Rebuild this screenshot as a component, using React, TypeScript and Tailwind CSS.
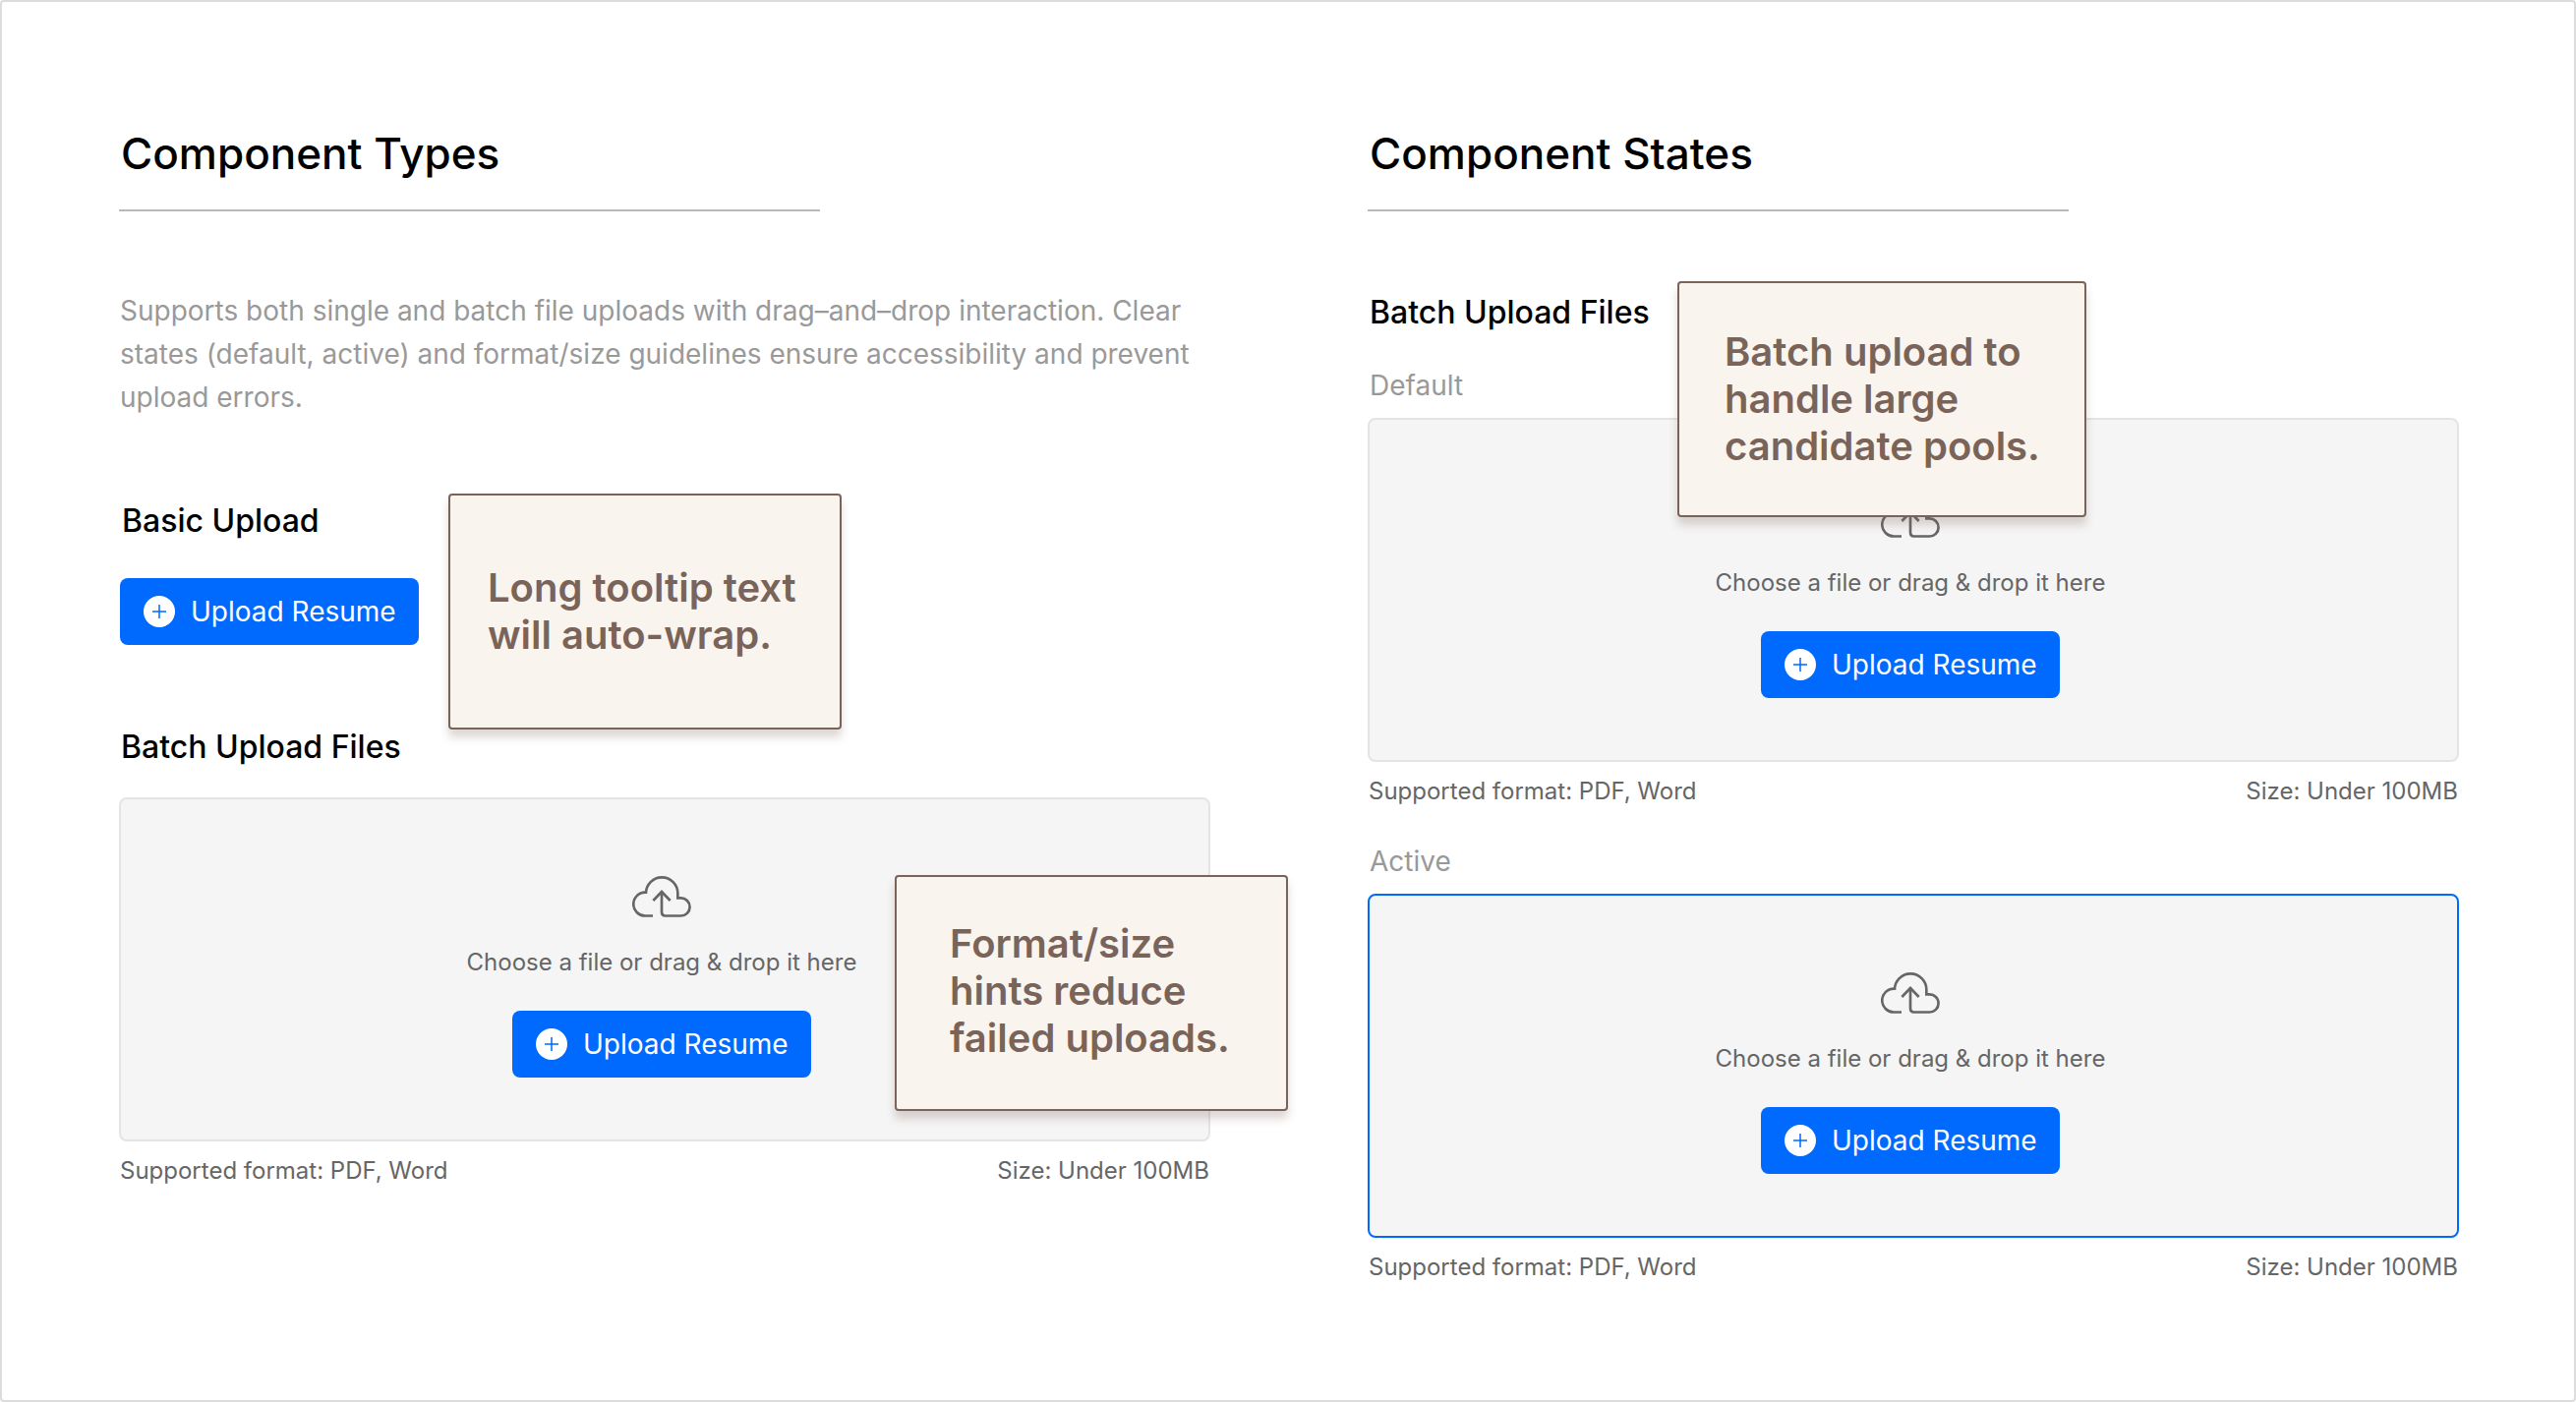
import type { ReactNode } from "react";
import clsx from "clsx";

function CloudUploadIcon() {
  return (
    <svg
      className="h-[42px] w-[60px]"
      viewBox="0 0 180 126"
      fill="none"
      stroke="currentColor"
      strokeWidth="8"
      aria-hidden="true"
    >
      <path d="M63 121.5H39.5A35.75 35.75 0 0 1 39.5 50H45" />
      <path d="M42 54V52.5A48.5 48.5 0 0 1 139 52.5V67H148.5A27.25 27.25 0 0 1 148.5 121.5H101Q90 121.5 90 110.500V47" />
      <path d="M64 75L90 48L116 75" />
    </svg>
  );
}

function PlusCircleIcon() {
  return (
    <svg className="size-8 shrink-0" viewBox="0 0 32 32" aria-hidden="true">
      <circle cx="16" cy="16" r="16" fill="#ffffff" />
      <path d="M16 9V23M9 16H23" stroke="#006aff" strokeWidth="1.5" />
    </svg>
  );
}

function UploadButton() {
  return (
    <button
      type="button"
      className="flex h-[68px] w-[304px] items-center gap-4 rounded-lg bg-[#006aff] px-6 text-[28px] leading-[44px] whitespace-nowrap text-white"
    >
      <PlusCircleIcon />
      Upload Resume
    </button>
  );
}

function SectionTitle({ children }: { children: ReactNode }) {
  return (
    <h1 className="max-w-[713px] border-b-2 border-[#bababa] pb-[25px] pl-0.5 text-[44px] leading-[64px] font-medium">
      {children}
    </h1>
  );
}

function Heading({ children }: { children: ReactNode }) {
  return <h2 className="pl-0.5 text-[32px] leading-[48px] font-medium">{children}</h2>;
}

function StateLabel({ children }: { children: ReactNode }) {
  return <h3 className="pl-0.5 text-[28px] leading-[44px] text-[#999999]">{children}</h3>;
}

function Note({ className, children }: { className: string; children: ReactNode }) {
  return (
    <aside
      className={clsx(
        "absolute z-10 flex h-[240px] items-center rounded border-2 border-[#7a6459] bg-[#f9f4ee] text-[40px] leading-[48px] font-semibold text-[#7a6459] shadow-[0_8px_8px_rgba(122,100,89,0.25)]",
        className,
      )}
    >
      <p>{children}</p>
    </aside>
  );
}

function UploadArea({ active = false, children }: { active?: boolean; children?: ReactNode }) {
  return (
    <div className="relative text-2xl text-[#666666]">
      <div
        className={clsx(
          "flex h-[350px] flex-col items-center rounded-lg border-2 bg-[#f5f5f5] pt-[78px] pr-[6px]",
          active ? "border-[#006aff]" : "border-[#e4e4e4]",
        )}
      >
        <CloudUploadIcon />
        <p className="mt-[30px] mb-[33px] leading-8">Choose a file or drag &amp; drop it here</p>
        <UploadButton />
      </div>
      <div className="mt-[14px] flex justify-between px-px leading-8">
        <p>Supported format: PDF, Word</p>
        <p>Size: Under 100MB</p>
      </div>
      {children}
    </div>
  );
}

export default function App() {
  return (
    <main className="grid min-h-screen grid-cols-2 gap-40 rounded border-2 border-[#dcdcdc] bg-white pt-[122px] pr-[117px] pb-[100px] pl-[119px] font-['Inter',sans-serif] text-black">
      <section>
        <SectionTitle>Component Types</SectionTitle>
        <p className="mt-[79px] pl-px text-[28px] leading-[44px] text-[#999999]">
          Supports both single and batch file uploads with drag–and–drop interaction. Clear
          <br />
          states (default, active) and format/size guidelines ensure accessibility and prevent
          <br />
          upload errors.
        </p>
        <div className="relative mt-20 flex flex-col items-start gap-[34px] pl-px">
          <Heading>Basic Upload</Heading>
          <UploadButton />
          <Note className="-top-1 left-[335px] w-[400px] pl-[38px]">
            Long tooltip text
            <br />
            will auto-wrap.
          </Note>
        </div>
        <div className="mt-20 flex flex-col gap-[27px]">
          <Heading>Batch Upload Files</Heading>
          <UploadArea>
            <Note className="top-[79px] -right-[79px] w-[400px] pb-1 pl-[54px]">
              Format/size
              <br />
              hints reduce
              <br />
              failed uploads.
            </Note>
          </UploadArea>
        </div>
      </section>

      <section>
        <SectionTitle>Component States</SectionTitle>
        <div className="relative mt-[79px]">
          <Heading>Batch Upload Files</Heading>
          <Note className="-top-2 left-[315px] w-[416px] pl-[46px]">
            Batch upload to
            <br />
            handle large
            <br />
            candidate pools.
          </Note>
          <div className="mt-7 flex flex-col gap-[11px]">
            <StateLabel>Default</StateLabel>
            <UploadArea />
          </div>
          <div className="mt-[33px] flex flex-col gap-[11px]">
            <StateLabel>Active</StateLabel>
            <UploadArea active />
          </div>
        </div>
      </section>
    </main>
  );
}
